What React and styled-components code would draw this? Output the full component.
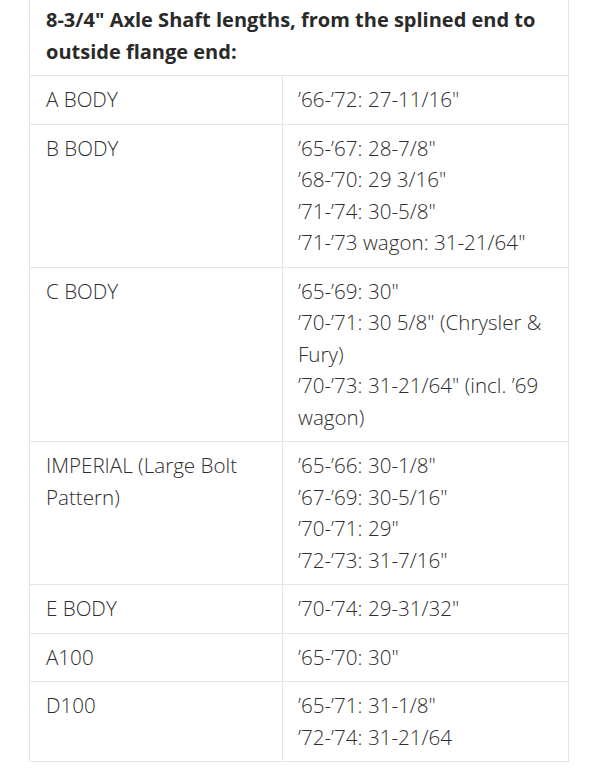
import React from "react";
import styled, { createGlobalStyle } from "styled-components";

const rows = [
  { body: "A BODY", lengths: ["’66-’72: 27-11/16\""] },
  {
    body: "B BODY",
    lengths: ["’65-’67: 28-7/8\"", "’68-’70: 29 3/16\"", "’71-’74: 30-5/8\"", "’71-’73 wagon: 31-21/64\""],
  },
  {
    body: "C BODY",
    lengths: ["’65-’69: 30\"", "’70-’71: 30 5/8\" (Chrysler & Fury)", "’70-’73: 31-21/64\" (incl. ’69 wagon)"],
  },
  {
    body: "IMPERIAL (Large Bolt Pattern)",
    lengths: ["’65-’66: 30-1/8\"", "’67-’69: 30-5/16\"", "’70-’71: 29\"", "’72-’73: 31-7/16\""],
  },
  { body: "E BODY", lengths: ["’70-’74: 29-31/32\""] },
  { body: "A100", lengths: ["’65-’70: 30\""] },
  { body: "D100", lengths: ["’65-’71: 31-1/8\"", "’72-’74: 31-21/64"] },
];

const GlobalStyle = createGlobalStyle`
  body {
    margin: 0;
    background: #fff;
    font-family: "Open Sans", "Noto Sans", sans-serif;
    color: #333;
  }
`;

export default function App() {
  return (
    <Wrapper>
      <GlobalStyle />
      <Table>
        <colgroup>
          <col style={{ width: 253 }} />
          <col />
        </colgroup>
        <thead>
          <tr>
            <HeadCell colSpan={2}>
              8-3/4" Axle Shaft lengths, from the splined end to outside flange end:
            </HeadCell>
          </tr>
        </thead>
        <tbody>
          {rows.map((row, index) => (
            <tr key={index}>
              <BodyCell>{row.body}</BodyCell>
              <LengthCell>
                {row.lengths.map((l, i) => (
                  <Line key={i}>{l}</Line>
                ))}
              </LengthCell>
            </tr>
          ))}
        </tbody>
      </Table>
    </Wrapper>
  );
}

const Wrapper = styled.div`
  padding: 0 30px 0 29px;
`;

const Table = styled.table`
  width: 540px;
  border-collapse: collapse;
  font-size: 20px;
  line-height: 31.5px;
  table-layout: fixed;
`;

const HeadCell = styled.th`
  text-align: left;
  font-weight: 700;
  color: #2a2a2a;
  padding: 4px 16px 8px;
  border: 1px solid #e5e5e5;
  border-top: none;
`;

const BodyCell = styled.td`
  vertical-align: top;
  padding: 8px 16px;
  border: 1px solid #e5e5e5;
  font-size: 20.6px;
  font-weight: 300;
  color: #2e2e2e;
`;

const LengthCell = styled(BodyCell)`
  padding: 8px 15px;
`;

const Line = styled.div``;
